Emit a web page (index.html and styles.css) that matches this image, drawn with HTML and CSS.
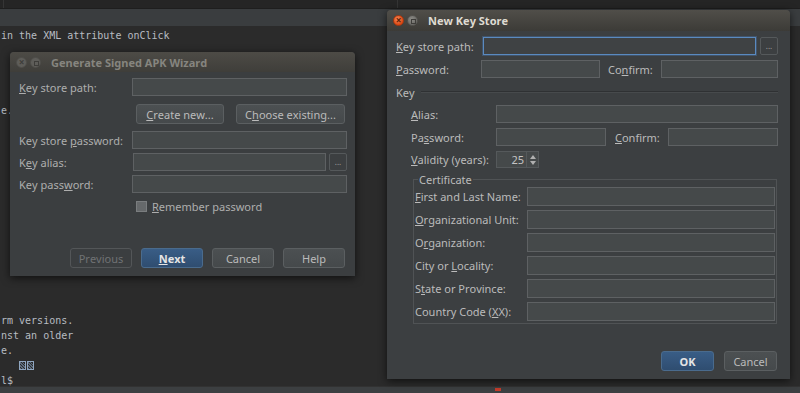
FILE: index.html
```html
<!DOCTYPE html>
<html lang="en">
<head>
    <meta charset="UTF-8">
    <title>New Key Store</title>
    <link rel="stylesheet" href="styles.css">
</head>
<body>
    <div class="ide">
        <div class="top-strip">
            <span class="strip-cell"></span>
            <span class="strip-cell wide"></span>
        </div>
        <div class="tool-header"></div>
        <pre class="terminal">in the XML attribute onClick




e.













rm versions.
nst an older
e.
   <span class="glyph"></span><span class="glyph"></span>
l$</pre>
        <div class="status-bar"><span class="mark"></span></div>
    </div>

    <!-- окно мастера, неактивное -->
    <div class="window wizard inactive">
        <div class="title-bar">
            <span class="wbtn close"></span>
            <span class="wbtn min"></span>
            <span class="title">Generate Signed APK Wizard</span>
        </div>
        <div class="wizard-body">
            <div class="w-row">
                <label><u>K</u>ey store path:</label>
                <div class="field"></div>
            </div>
            <div class="w-row create-row">
                <span></span>
                <div class="pair">
                    <button class="btn create"><u>C</u>reate new...</button>
                    <button class="btn choose">C<u>h</u>oose existing...</button>
                </div>
            </div>
            <div class="w-row">
                <label>Key store <u>p</u>assword:</label>
                <div class="field"></div>
            </div>
            <div class="w-row">
                <label>K<u>e</u>y alias:</label>
                <div class="field-browse">
                    <div class="field"></div>
                    <button class="dots">...</button>
                </div>
            </div>
            <div class="w-row">
                <label>Key pass<u>w</u>ord:</label>
                <div class="field"></div>
            </div>
            <div class="w-row check-row">
                <span></span>
                <div class="check"><span class="box-check"></span><span><u>R</u>emember password</span></div>
            </div>
            <div class="footer">
                <button class="btn disabled">Previous</button>
                <button class="btn default"><u>N</u>ext</button>
                <button class="btn">Cancel</button>
                <button class="btn">Help</button>
            </div>
        </div>
    </div>

    <!-- новое хранилище ключей -->
    <div class="window keystore">
        <div class="title-bar">
            <span class="wbtn close"></span>
            <span class="wbtn min"></span>
            <span class="title">New Key Store</span>
        </div>
        <div class="ks-body">
            <div class="ks-row path-row">
                <label><u>K</u>ey store path:</label>
                <div class="field focused"></div>
                <button class="dots">...</button>
            </div>
            <div class="ks-row pass-row">
                <label><u>P</u>assword:</label>
                <div class="field"></div>
                <label>Co<u>n</u>firm:</label>
                <div class="field"></div>
            </div>
            <div class="group-title">
                <span>Key</span>
                <span class="rule"></span>
            </div>
            <div class="key-group">
                <div class="ks-row alias-row">
                    <label><u>A</u>lias:</label>
                    <div class="field"></div>
                </div>
                <div class="ks-row key-pass-row">
                    <label>Pa<u>s</u>sword:</label>
                    <div class="field"></div>
                    <label><u>C</u>onfirm:</label>
                    <div class="field"></div>
                </div>
                <div class="ks-row validity-row">
                    <label><u>V</u>alidity (years):</label>
                    <div class="spinner">
                        <span class="spin-value">25</span>
                        <span class="spin-arrows"><i class="up"></i><i class="down"></i></span>
                    </div>
                </div>
                <fieldset class="cert">
                    <legend>Certificate</legend>
                    <div class="cert-row"><label><u>F</u>irst and Last Name:</label><div class="field"></div></div>
                    <div class="cert-row"><label><u>O</u>rganizational Unit:</label><div class="field"></div></div>
                    <div class="cert-row"><label>O<u>r</u>ganization:</label><div class="field"></div></div>
                    <div class="cert-row"><label>City or <u>L</u>ocality:</label><div class="field"></div></div>
                    <div class="cert-row"><label>S<u>t</u>ate or Province:</label><div class="field"></div></div>
                    <div class="cert-row"><label>Country Code (<u>X</u>X):</label><div class="field"></div></div>
                </fieldset>
            </div>
            <div class="footer">
                <button class="btn default ok">OK</button>
                <button class="btn">Cancel</button>
            </div>
        </div>
    </div>
</body>
</html>
```

FILE: styles.css
```css
body {
    margin: 0;
    font-family: "Noto Sans", "Open Sans", sans-serif;
    font-size: 11px;
    font-kerning: none;
    background-color: #2b2b2b;
    color: #bbbbbb;
    overflow: hidden;
}
u {
    text-decoration: underline;
    text-underline-offset: 1px;
}
.ide {
    height: 393px;
    display: flex;
    flex-direction: column;
}
.top-strip {
    height: 8px;
    background: #252525;
    display: flex;
}
.strip-cell {
    width: 3px;
    border-right: 1px solid #353535;
}
.strip-cell.wide {
    width: 393px;
}
.tool-header {
    height: 18px;
    background: #3a3d3f;
    border-top: 1px solid #1e1e1e;
    box-sizing: border-box;
}
.terminal {
    flex: 1;
    margin: 0;
    padding: 2px 0 0 1px;
    font-family: "DejaVu Sans Mono", monospace;
    font-size: 10px;
    line-height: 15px;
    color: #b8bcc2;
    overflow: hidden;
}
.terminal .glyph {
    display: inline-block;
    width: 5px;
    height: 7px;
    margin-right: 1px;
    border: 1px solid #8fa6c0;
    background: repeating-linear-gradient(45deg, #5c6b7c 0 1px, transparent 1px 2px);
    vertical-align: -1px;
}
.status-bar {
    height: 6px;
    background: #3c3f41;
    border-top: 1px solid #323232;
    position: relative;
}
.status-bar .mark {
    position: absolute;
    left: 495px;
    top: 1px;
    width: 6px;
    height: 3px;
    background: #c23b2b;
}

/* окна */
.window {
    position: absolute;
    background: #3c3f41;
    border-radius: 4px 4px 0 0;
    box-shadow: 0 2px 8px rgba(0, 0, 0, 0.65);
    display: flex;
    flex-direction: column;
}
.wizard {
    left: 10px;
    top: 52px;
    width: 345px;
    height: 224px;
    background: #3b3e40;
}
.keystore {
    left: 387px;
    top: 10px;
    width: 403px;
    height: 369px;
}
.title-bar {
    height: 20px;
    display: flex;
    align-items: center;
    padding-left: 6px;
    background: linear-gradient(#4d4b46, #3f3e3a);
    border-radius: 4px 4px 0 0;
    flex-shrink: 0;
}
.keystore .title-bar {
    height: 21px;
    background: linear-gradient(#504e49, #3c3b37);
}
.title {
    font-weight: bold;
    font-size: 11px;
    color: #dfdbd2;
    margin-left: 7px;
}
.inactive .title {
    color: #86857f;
}
.wbtn {
    width: 11px;
    height: 11px;
    border-radius: 50%;
    margin-right: 3px;
    position: relative;
    box-sizing: border-box;
}
.wbtn.close {
    background: radial-gradient(circle at 40% 35%, #f58a5a, #dd4814 70%);
    border: 1px solid #a8380f;
}
.wbtn.close::after {
    content: '×';
    position: absolute;
    left: 0;
    right: 0;
    top: -3px;
    text-align: center;
    font-size: 10px;
    font-weight: bold;
    color: #5a1f08;
}
.wbtn.min {
    background: radial-gradient(circle at 40% 35%, #8c8b86, #6b6a66 70%);
    border: 1px solid #54534f;
}
.wbtn.min::after {
    content: '';
    position: absolute;
    left: 3px;
    top: 3px;
    width: 3px;
    height: 3px;
    border: 1px solid #3e3d3a;
}
.inactive .wbtn.close,
.inactive .wbtn.min {
    background: #5e5d59;
    border-color: #4e4d49;
}
.inactive .wbtn.close::after {
    color: #3f3e3b;
}

/* поля и кнопки */
.field {
    height: 19px;
    box-sizing: border-box;
    background: #45494a;
    border: 1px solid #5e6163;
}
.field.focused {
    background: #3f4244;
    border: 1px solid #5a8ac0;
    box-shadow: 0 0 0 1px rgba(70, 110, 160, 0.45);
}
.btn {
    height: 20px;
    box-sizing: border-box;
    font-family: inherit;
    font-size: 11px;
    font-kerning: none;
    color: #bbbbbb;
    background: linear-gradient(#4c5052, #45494b);
    border: 1px solid #5b5f61;
    border-radius: 3px;
    padding: 0;
}
.btn.default {
    background: linear-gradient(#395d86, #2f4d70);
    border-color: #4a6b8d;
    color: #e4e4e4;
    font-weight: bold;
}
.btn.disabled {
    background: #3b3e40;
    border-color: #535658;
    color: #707274;
}
.dots {
    width: 18px;
    height: 18px;
    padding: 0;
    box-sizing: border-box;
    background: #3c3f41;
    border: 1px solid #55595b;
    border-radius: 2px;
    color: #a0a0a0;
    font-size: 8px;
    line-height: 8px;
    font-family: inherit;
}

/* мастер */
.wizard-body {
    flex: 1;
    display: flex;
    flex-direction: column;
    padding: 6px 8px 8px 9px;
    color: #aeaeae;
}
.w-row {
    display: grid;
    grid-template-columns: 113px 1fr;
    align-items: center;
    margin-bottom: 4px;
}
.w-row .field {
    height: 18px;
}
.create-row {
    margin: 4px 0 7px;
}
.pair {
    display: flex;
    gap: 12px;
    padding: 0 2px 0 4px;
}
.pair .create {
    width: 88px;
}
.pair .choose {
    flex: 1;
}
.field-browse {
    display: flex;
    gap: 3px;
    padding-left: 1px;
}
.field-browse .field {
    flex: 1;
}
.check-row {
    margin-top: 2px;
}
.check {
    display: flex;
    align-items: center;
    padding-left: 4px;
    gap: 5px;
}
.box-check {
    width: 11px;
    height: 11px;
    box-sizing: border-box;
    background: #66696b;
    border: 1px solid #7a7d7f;
}
.footer {
    margin-top: auto;
    display: flex;
    justify-content: flex-end;
    gap: 9px;
    padding-right: 2px;
}
.wizard .footer .btn {
    width: 62px;
}

/* хранилище */
.ks-body {
    flex: 1;
    display: flex;
    flex-direction: column;
    padding: 6px 12px 8px 9px;
}
.ks-row {
    display: flex;
    align-items: center;
}
.ks-row .field {
    height: 18px;
}
.path-row label {
    width: 87px;
}
.path-row .field {
    flex: 1;
    margin-right: 4px;
}
.pass-row {
    margin-top: 5px;
}
.pass-row label:first-child {
    width: 85px;
}
.pass-row .field {
    width: 119px;
}
.pass-row .field:last-child {
    flex: 1;
}
.pass-row label:nth-child(3) {
    width: 53px;
    margin-left: 8px;
}
.group-title {
    display: flex;
    align-items: center;
    gap: 6px;
    margin-top: 7px;
    height: 14px;
}
.group-title .rule {
    flex: 1;
    height: 1px;
    background: #2f3133;
    border-bottom: 1px solid #474a4c;
}
.key-group {
    padding-left: 15px;
    margin-top: 6px;
}
.alias-row label {
    width: 85px;
}
.alias-row .field {
    flex: 1;
}
.key-pass-row {
    margin-top: 5px;
}
.key-pass-row label:first-child {
    width: 85px;
}
.key-pass-row .field {
    width: 110px;
}
.key-pass-row label:nth-child(3) {
    width: 53px;
    margin-left: 9px;
}
.validity-row {
    margin-top: 5px;
}
.validity-row label {
    width: 85px;
}
.spinner {
    width: 43px;
    height: 17px;
    box-sizing: border-box;
    display: flex;
    background: #45494a;
    border: 1px solid #55595b;
}
.spin-value {
    flex: 1;
    text-align: right;
    padding-right: 2px;
    line-height: 15px;
    color: #c4c4c4;
}
.spin-arrows {
    width: 11px;
    border-left: 1px solid #55595b;
    display: flex;
    flex-direction: column;
    align-items: center;
    justify-content: center;
    gap: 2px;
}
.spin-arrows i {
    width: 0;
    height: 0;
    border-left: 3px solid transparent;
    border-right: 3px solid transparent;
}
.spin-arrows .up {
    border-bottom: 4px solid #b0b0b0;
}
.spin-arrows .down {
    border-top: 4px solid #b0b0b0;
}
.cert {
    margin: 5px 1px 0 2px;
    padding: 1px 1px 2px 1px;
    border: 1px solid #505355;
    min-width: 0;
    display: flex;
    flex-direction: column;
    gap: 4px;
}
.cert legend {
    padding: 0 1px;
    margin-left: 3px;
    line-height: 13px;
}
.cert-row {
    display: flex;
    align-items: center;
}
.cert-row label {
    width: 112px;
}
.cert-row .field {
    flex: 1;
}
.keystore .footer {
    gap: 10px;
    padding-right: 1px;
}
.keystore .footer .btn {
    width: 53px;
}
```
